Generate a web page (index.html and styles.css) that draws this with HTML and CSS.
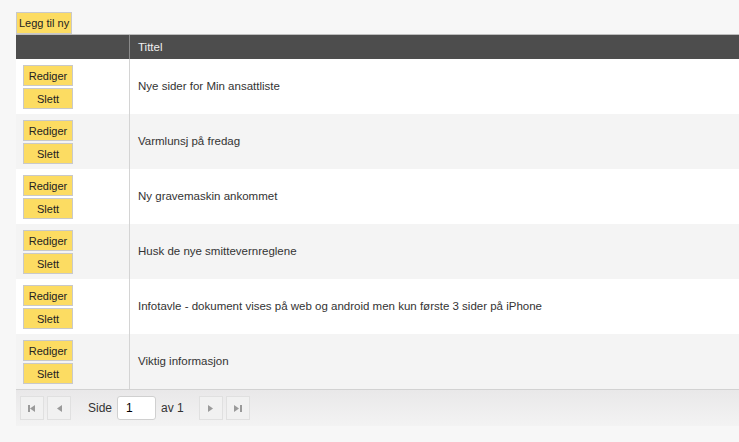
FILE: index.html
```html
<!DOCTYPE html>
<html lang="no">
<head>
    <meta charset="UTF-8">
    <title>Oppslag</title>
    <link rel="stylesheet" href="styles.css">
</head>
<body>
    <div class="toolbar">
        <button class="btn">Legg til ny</button>
    </div>

    <div class="grid">
        <div class="grid-header">
            <div class="col-actions"></div>
            <div class="col-title">Tittel</div>
        </div>

        <div class="grid-row">
            <div class="col-actions">
                <button class="btn btn-small">Rediger</button>
                <button class="btn btn-small">Slett</button>
            </div>
            <div class="col-title">Nye sider for Min ansattliste</div>
        </div>
        <div class="grid-row alt">
            <div class="col-actions">
                <button class="btn btn-small">Rediger</button>
                <button class="btn btn-small">Slett</button>
            </div>
            <div class="col-title">Varmlunsj på fredag</div>
        </div>
        <div class="grid-row">
            <div class="col-actions">
                <button class="btn btn-small">Rediger</button>
                <button class="btn btn-small">Slett</button>
            </div>
            <div class="col-title">Ny gravemaskin ankommet</div>
        </div>
        <div class="grid-row alt">
            <div class="col-actions">
                <button class="btn btn-small">Rediger</button>
                <button class="btn btn-small">Slett</button>
            </div>
            <div class="col-title">Husk de nye smittevernreglene</div>
        </div>
        <div class="grid-row">
            <div class="col-actions">
                <button class="btn btn-small">Rediger</button>
                <button class="btn btn-small">Slett</button>
            </div>
            <div class="col-title">Infotavle - dokument vises på web og android men kun første 3 sider på iPhone</div>
        </div>
        <div class="grid-row alt">
            <div class="col-actions">
                <button class="btn btn-small">Rediger</button>
                <button class="btn btn-small">Slett</button>
            </div>
            <div class="col-title">Viktig informasjon</div>
        </div>

        <!-- Sidevelger -->
        <div class="pager">
            <button class="pager-btn" title="Første">
                <svg width="8" height="7" viewBox="0 0 8 7"><rect x="0" y="0" width="2" height="7" fill="#9a9a9a"/><polygon points="7,0 2,3.5 7,7" fill="#9a9a9a"/></svg>
            </button>
            <button class="pager-btn" title="Forrige">
                <svg width="5" height="7" viewBox="0 0 5 7"><polygon points="5,0 0,3.5 5,7" fill="#9a9a9a"/></svg>
            </button>
            <span class="pager-label">Side</span>
            <input class="pager-input" type="text" value="1">
            <span class="pager-label">av 1</span>
            <button class="pager-btn next-first" title="Neste">
                <svg width="5" height="7" viewBox="0 0 5 7"><polygon points="0,0 5,3.5 0,7" fill="#9a9a9a"/></svg>
            </button>
            <button class="pager-btn" title="Siste">
                <svg width="8" height="7" viewBox="0 0 8 7"><polygon points="0,0 5,3.5 0,7" fill="#9a9a9a"/><rect x="6" y="0" width="2" height="7" fill="#9a9a9a"/></svg>
            </button>
        </div>
    </div>
</body>
</html>
```

FILE: styles.css
```css
body {
    font-family: "Liberation Sans", Arial, sans-serif;
    font-size: 11px;
    background-color: #f7f7f7;
    margin: 0;
    padding: 12px 0 0 16px;
    overflow: hidden;
}

.toolbar {
    display: flex;
}

.btn {
    font-family: "Liberation Sans", Arial, sans-serif;
    font-size: 11px;
    color: #222;
    background-color: #fcdc62;
    border: 1px solid #c9c9c9;
    padding: 0 2px;
    height: 22px;
    cursor: pointer;
}

.btn-small {
    width: 50px;
    height: 21px;
    padding: 0;
}

.grid {
    display: flex;
    flex-direction: column;
}

.grid-header {
    display: flex;
    height: 25px;
    background-color: #4d4d4d;
    color: #f0f0f0;
    border-top: 1px solid #bdbdbd;
    box-sizing: border-box;
    font-size: 11.5px;
}

.grid-header .col-actions {
    border-right: 1px solid #8a8a8a;
}

.grid-header .col-title {
    display: flex;
    align-items: center;
    padding-left: 8px;
}

.col-actions {
    width: 113px;
    flex-shrink: 0;
}

.grid-row {
    display: flex;
    height: 55px;
    background-color: #fff;
    color: #333;
}

.grid-row.alt {
    background-color: #f4f4f4;
}

.grid-row .col-actions {
    display: flex;
    flex-direction: column;
    gap: 2px;
    padding: 6px 0 0 7px;
    width: 106px;
    border-right: 1px solid #d4d4d4;
}

.grid-row .col-title {
    display: flex;
    align-items: center;
    padding-left: 8px;
    padding-bottom: 2px;
    font-size: 11.5px;
}

.pager {
    display: flex;
    align-items: center;
    height: 36px;
    padding-left: 4px;
    border-top: 1px solid #d2d2d2;
    background: linear-gradient(#e9e8e9, #f3f3f3);
    color: #333;
    font-size: 12px;
}

.pager-btn {
    width: 24px;
    height: 24px;
    margin-right: 3px;
    background-color: #f1f1f1;
    border: 1px solid #e0e0e0;
    display: flex;
    align-items: center;
    justify-content: center;
    padding: 0;
}

.pager-btn.next-first {
    margin-left: 15px;
}

.pager-label {
    margin-left: 14px;
}

.pager-label + .pager-input {
    margin-left: 5px;
}

.pager-input {
    width: 39px;
    height: 24px;
    box-sizing: border-box;
    border: 1px solid #d0d0d0;
    border-radius: 3px;
    font-family: "Liberation Sans", Arial, sans-serif;
    font-size: 12px;
    padding: 0 8px;
    margin-right: -9px;
}
```
